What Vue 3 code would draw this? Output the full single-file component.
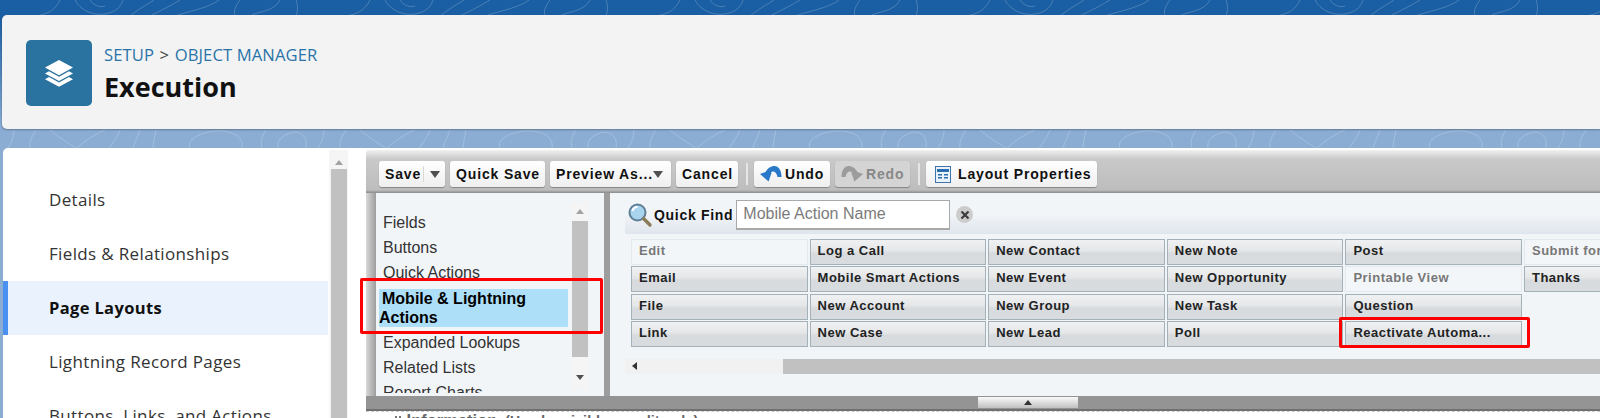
<script setup>
const navItems = [
  { label: 'Details' },
  { label: 'Fields & Relationships' },
  { label: 'Page Layouts', active: true },
  { label: 'Lightning Record Pages' },
  { label: 'Buttons, Links, and Actions' }
]
const listBefore = ['Fields', 'Buttons', 'Quick Actions']
const listAfter = ['Expanded Lookups', 'Related Lists', 'Report Charts']
const cells = [
  { t: 'Edit', off: true }, { t: 'Log a Call' }, { t: 'New Contact' }, { t: 'New Note' }, { t: 'Post' }, { t: 'Submit for Approval', off: true },
  { t: 'Email' }, { t: 'Mobile Smart Actions' }, { t: 'New Event' }, { t: 'New Opportunity' }, { t: 'Printable View', off: true }, { t: 'Thanks' },
  { t: 'File' }, { t: 'New Account' }, { t: 'New Group' }, { t: 'New Task' }, { t: 'Question' }, { t: '', none: true },
  { t: 'Link' }, { t: 'New Case' }, { t: 'New Lead' }, { t: 'Poll' }, { t: 'Reactivate Automa...' }, { t: '', none: true }
]
</script>

<template>
  <div class="page">
    <svg class="topo" width="1600" height="150" aria-hidden="true">
      <defs>
        <pattern id="topo" width="310" height="150" patternUnits="userSpaceOnUse">
          <g fill="none" stroke="#fff" stroke-opacity=".2" stroke-width="1">
            <path d="M60 0c-6 12-14 14-24 16M75 0c5 10 18 16 30 14s16-8 18-14M90 0c3 5 10 8 15 6" />
            <path d="M130 16c10-8 18-12 24-16M150 16c12-6 20-10 30-16M175 16c14-5 34-8 44-16" />
            <path d="M235 16c-2-6 2-12 5-16M250 16c8-5 24-4 30-16M296 0c2 5 2 10 0 16" />
            <path d="M50 130c12 10 20 14 26 18M105 130c-14 6-24 14-30 20M120 130c-2 6-8 14-12 20M140 130c-2 6-6 14-8 20M156 130c-1 6-3 12-3 20" />
            <path d="M190 148c-4-8 10-16 26-17s28 6 26 17M262 148c-2-6 0-12 4-18M8 148c4-6 6-12 6-18M30 148c-1-6 2-12 6-18" />
            <path d="M278 148c-2-8 6-14 16-16 8 0 14 6 12 16" />
          </g>
        </pattern>
      </defs>
      <rect width="1600" height="150" fill="url(#topo)" />
    </svg>

    <header class="card">
      <div class="object-icon">
        <svg width="30" height="30" viewBox="0 0 30 30">
          <path d="M15 2 29 9.6 15 17.2 1 9.6Z" fill="#fff" />
          <path d="M5 13.2 15 18.8 25 13.2 29 15.4 15 23 1 15.4Z" fill="#fff" />
          <path d="M5 19 15 24.6 25 19 29 21.2 15 28.8 1 21.2Z" fill="#fff" />
        </svg>
      </div>
      <div class="titles">
        <div class="crumb"><span>SETUP</span> <i>&gt;</i> <span>OBJECT MANAGER</span></div>
        <h1>Execution</h1>
      </div>
    </header>

    <div class="content">
      <aside class="side">
        <nav class="nav">
          <a v-for="n in navItems" :key="n.label" class="nav-item" :class="{ active: n.active }">{{ n.label }}</a>
        </nav>
        <div class="vscroll side-scroll">
          <span class="tri up"></span>
          <span class="thumb"></span>
        </div>
      </aside>

      <section class="editor">
        <div class="toolbar">
          <button class="tb save"><span class="save-label">Save</span><span class="tri dark"></span></button>
          <button class="tb quick">Quick Save</button>
          <button class="tb preview">Preview As...<span class="tri dark"></span></button>
          <button class="tb cancel">Cancel</button>
          <span class="sep"></span>
          <button class="tb icon-btn undo">
            <svg width="22" height="17" viewBox="0 0 22 17">
              <path d="M0 8 5.5 6C8 1.5 12 0 14.5 0 18.5 0 21.5 4 21.5 11H17.5C17 7.5 15 5.5 13 5.5 12.200 5.5 11.600 6 11 6.5L11.5 7 8.600 15.600Z" fill="#2a78c8" />
            </svg>Undo
          </button>
          <button class="tb icon-btn redo disabled">
            <svg width="22" height="17" viewBox="0 0 22 17">
              <path transform="matrix(-1 0 0 1 22 0)" d="M0 8 5.5 6C8 1.5 12 0 14.5 0 18.5 0 21.5 4 21.5 11H17.5C17 7.5 15 5.5 13 5.5 12.200 5.5 11.600 6 11 6.5L11.5 7 8.600 15.600Z" fill="#9c9c9c" />
            </svg>Redo
          </button>
          <span class="sep"></span>
          <button class="tb icon-btn layout">
            <svg width="16" height="17" viewBox="0 0 16 17">
              <rect x=".5" y=".5" width="15" height="16" fill="#eaf2fb" stroke="#3f74ad" />
              <rect x="2" y="3" width="12" height="3" fill="#2a6cb0" />
              <path d="M3 8h4v1.5H3zM9 8h4v1.5H9zM3 11h4v1.5H3zM9 11h4v1.5H9z" fill="#2a6cb0" />
            </svg>Layout Properties
          </button>
        </div>

        <div class="workspace">
          <div class="palette-list">
            <ul class="list">
              <li v-for="l in listBefore" :key="l">{{ l }}</li>
              <li class="selected">Mobile &amp; Lightning Actions</li>
              <li v-for="l in listAfter" :key="l">{{ l }}</li>
            </ul>
            <div class="vscroll list-scroll">
              <span class="tri up"></span>
              <span class="thumb"></span>
              <span class="tri dark"></span>
            </div>
          </div>

          <div class="palette">
            <div class="finder">
              <svg width="26" height="26" viewBox="0 0 26 26">
                <circle cx="10.5" cy="10.5" r="8" fill="#a9d4ee" stroke="#5f7f94" stroke-width="2" />
                <path d="M5.5 9a5 5 0 0 1 5-4" fill="none" stroke="#fff" stroke-width="2" />
                <path d="M16.5 16.5 23 23" stroke="#8a7a58" stroke-width="3.4" stroke-linecap="round" />
              </svg>
              <span class="find-label">Quick Find</span>
              <input class="find-input" placeholder="Mobile Action Name" />
              <span class="clear">
                <svg width="10" height="10" viewBox="0 0 10 10">
                  <path d="M1.5 1.5l7 7M8.5 1.5l-7 7" stroke="#3d3d3d" stroke-width="2.2" />
                </svg>
              </span>
            </div>
            <div class="grid">
              <div
                v-for="(c, i) in cells"
                :key="i"
                class="cell"
                :class="{ off: c.off, none: c.none }"
              >{{ c.t }}</div>
            </div>
            <div class="hscroll">
              <span class="hleft"><span class="tri left"></span></span>
              <span class="hthumb"></span>
            </div>
          </div>
        </div>

        <div class="splitter"><span class="handle"><span class="tri up black"></span></span></div>
        <div class="preview-head"><span class="grip"></span> Information <small>(Header visible on edit only)</small></div>
      </section>
    </div>

    <div class="mark mark-list"></div>
    <div class="mark mark-cell"></div>
  </div>
</template>

<style>
html, body { margin: 0; padding: 0; background: #fff; }
</style>

<style scoped>
.page {
  position: relative;
  width: 1600px;
  height: 418px;
  overflow: hidden;
  display: flex;
  flex-direction: column;
  background: linear-gradient(#1a5ea3 0, #1a5ea3 15px, #8badd4 130px, #8badd4 150px);
  font-family: "Liberation Sans", Arial, sans-serif;
}
.topo { position: absolute; left: 0; top: 0; }

.card {
  position: relative;
  flex: none;
  height: 114px;
  margin: 15px 0 19px 2px;
  padding: 25px 24px;
  box-sizing: border-box;
  display: flex;
  gap: 12px;
  background: #f3f3f3;
  border-radius: 5px 0 0 5px;
  box-shadow: 0 1px 2px rgba(0, 0, 0, .3);
  font-family: "Open Sans", sans-serif;
}
.object-icon {
  width: 66px;
  height: 66px;
  flex: none;
  display: flex;
  align-items: center;
  justify-content: center;
  background: #2a729f;
  border-radius: 5px;
}
.crumb {
  margin-top: 5px;
  font-size: 16.6px;
  letter-spacing: .12px;
  line-height: 20px;
  color: #2a73a8;
  white-space: nowrap;
}
.crumb i { font-style: normal; color: #444; margin: 0 1px; }
h1 {
  margin: 5px 0 0;
  font-size: 27px;
  line-height: 34px;
  font-weight: 700;
  color: #111;
}

.content {
  position: relative;
  flex: 1;
  min-height: 0;
  margin-left: 3px;
  display: flex;
  background: #fff;
  border-radius: 5px 0 0 0;
}
.side { flex: none; width: 346px; display: flex; }
.nav {
  flex: none;
  width: 325px;
  padding-top: 24.5px;
  font-family: "Open Sans", sans-serif;
  font-size: 17px;
  letter-spacing: .35px;
  color: #333;
}
.nav-item {
  display: flex;
  align-items: center;
  box-sizing: border-box;
  height: 54px;
  padding-left: 46px;
  white-space: nowrap;
}
.nav-item.active {
  padding-left: 41px;
  background: #eaf3fd;
  border-left: 5px solid #4a90f0;
  font-weight: 700;
  font-size: 16.5px;
  color: #111;
}
.vscroll {
  position: relative;
  flex: none;
  display: flex;
  flex-direction: column;
  align-items: center;
  background: #f5f5f5;
}
.side-scroll { width: 19px; margin: 2px 0 0 1px; padding-top: 10px; }
.side-scroll .thumb { display: block; width: 16px; flex: 1; margin-top: 4px; background: #c1c1c1; }

.tri {
  display: inline-block;
  width: 0;
  height: 0;
  border-left: 4px solid transparent;
  border-right: 4px solid transparent;
  border-top: 5px solid #505050;
}
.tb .tri { border-left-width: 5px; border-right-width: 5px; border-top-width: 7px; }
.tri.up { border-top: 0; border-bottom: 5px solid #a3a3a3; }
.tri.up.black { border-bottom-color: #333; }
.tri.left {
  border-top: 4px solid transparent;
  border-bottom: 4px solid transparent;
  border-left: 0;
  border-right: 5px solid #333;
}

.editor {
  flex: 1;
  min-width: 0;
  margin: 2px 0 0 17px;
  display: flex;
  flex-direction: column;
  background: #fff;
  overflow: hidden;
}
.toolbar {
  flex: none;
  height: 43px;
  box-sizing: border-box;
  padding: 11px 0 0 13px;
  display: flex;
  align-items: flex-start;
  gap: 5px;
  background: linear-gradient(#f0f0f0 0, #c9c9c9 9px, #bdbdbd 40px, #8a8a8a 43px);
  border-radius: 3px 0 0 0;
}
.tb {
  height: 26px;
  padding: 0 6px;
  display: flex;
  align-items: center;
  box-sizing: border-box;
  border: 0;
  border-radius: 3px;
  background: linear-gradient(#fff, #efefef);
  box-shadow: 0 1px 1px rgba(0, 0, 0, .3);
  font: 700 14px "Liberation Sans", Arial, sans-serif;
  letter-spacing: .85px;
  color: #111;
  white-space: nowrap;
}
.save { width: 66px; padding: 0 0 0 6px; }
.save-label { width: 38px; border-right: 1px solid #d9d9d9; margin-right: 6px; text-align: left; }
.quick { width: 95px; }
.preview { width: 121px; }
.preview .tri { margin-left: 0; }
.cancel { width: 62px; }
.undo { width: 76px; }
.redo { width: 75px; }
.icon-btn svg { margin: 0 3px 0 0; flex: none; }
.icon-btn.disabled { background: #d4d4d4; color: #888; }
.layout { width: 171px; }
.layout svg { margin: 0 7px 0 3px; }
.sep { width: 2px; height: 22px; margin: 2px 1px 0 3px; background: #e6e6e6; }

.workspace {
  flex: none;
  height: 203px;
  display: flex;
  gap: 6px;
  padding-left: 10px;
  background: linear-gradient(90deg, #d8d8d8, #9d9d9d 10px);
  background-color: #bdbdbd;
}
.palette-list {
  position: relative;
  flex: none;
  width: 228px;
  display: flex;
  background: #f2f5f8;
  overflow: hidden;
}
.list {
  width: 195px;
  height: 200px;
  box-sizing: border-box;
  overflow: hidden;
  margin: 0;
  padding: 17px 0 0 3px;
  list-style: none;
  font-size: 16px;
  line-height: 25px;
  color: #333;
}
.list li { padding-left: 4px; white-space: nowrap; }
.list li.selected {
  box-sizing: border-box;
  width: 189px;
  height: 38px;
  margin: 4px 0 3px;
  padding-left: 0;
  text-indent: 3px;
  white-space: normal;
  background: #aedff9;
  color: #000;
  font-weight: 700;
  line-height: 19px;
}
.list-scroll {
  width: 17px;
  height: 187px;
  margin: 10px 0 0 0;
  padding-top: 6px;
  box-sizing: border-box;
}
.list-scroll .thumb { width: 16px; height: 136px; margin: 7px 0 18px; background: #c1c1c1; }

.palette {
  flex: 1;
  min-width: 0;
  padding-left: 15px;
  background: #f2f5f8;
  overflow: hidden;
}
.finder {
  height: 41px;
  box-sizing: border-box;
  padding: 2px 0 0 2px;
  display: flex;
  align-items: center;
  background: linear-gradient(#f2f5f8 50%, #dfe5ed);
}
.finder svg { flex: none; }
.find-label {
  margin-left: 1px;
  font-weight: 700;
  font-size: 14px;
  letter-spacing: .7px;
  color: #111;
}
.find-input {
  width: 214px;
  height: 30px;
  box-sizing: border-box;
  margin-left: 3px;
  padding: 0 6px 0 6px;
  border: 1px solid #a9a9a9;
  border-width: 1px 1px 2px 1px;
  background: #fff;
  font: 16px "Liberation Sans", Arial, sans-serif;
  outline: 0;
}
.find-input::placeholder { color: #7b7b7b; opacity: 1; }
.clear {
  width: 17px;
  height: 17px;
  margin-left: 6px;
  border-radius: 50%;
  background: #ccc;
  display: flex;
  align-items: center;
  justify-content: center;
}
.grid {
  display: grid;
  grid-template-columns: repeat(6, 176.6px);
  grid-auto-rows: 26px;
  gap: 1.33px 2px;
  margin: 5px 0 0 6px;
}
.cell {
  box-sizing: border-box;
  padding: 0 0 3px 7px;
  display: flex;
  align-items: center;
  border: 1px solid #a5b1b9;
  background: linear-gradient(#f0f1f3, #e4e6e8 45%, #d8dbde 55%, #d9dcdf);
  font-weight: 700;
  font-size: 13px;
  letter-spacing: .5px;
  color: #222;
  white-space: nowrap;
  overflow: hidden;
}
.cell.off { background: #f3f6f9; border-color: #e3e8ec; color: #777; }
.cell.none { visibility: hidden; }
.hscroll {
  height: 15px;
  margin-top: 12px;
  display: flex;
  background: #f1f1f1;
}
.hleft { width: 158px; flex: none; padding-left: 7px; box-sizing: border-box; display: flex; align-items: center; }
.hthumb { flex: 1; background: #c1c1c1; }

.splitter {
  flex: none;
  height: 15px;
  padding-left: 90px;
  display: flex;
  justify-content: center;
  box-sizing: border-box;
  background: #949494;
  border-bottom: 2px solid #707070;
}
.handle {
  width: 100px;
  height: 11px;
  margin-top: 1px;
  display: flex;
  align-items: center;
  justify-content: center;
  background: linear-gradient(#fafafa, #bfbfbf);
}
.preview-head {
  padding: 0 0 0 29px;
  border-top: 1px dashed #ccc;
  font-weight: 700;
  font-size: 16.5px;
  line-height: 16px;
  color: #666;
  white-space: nowrap;
}
.preview-head small { font-size: 14.5px; margin-left: 3px; }
.grip {
  display: inline-block;
  width: 2px;
  height: 10px;
  margin-right: 1px;
  border-left: 2px dotted #777;
  border-right: 2px dotted #777;
}

.mark { position: absolute; box-sizing: border-box; border: 3px solid #f00; border-radius: 2px; }
.mark-list { left: 360px; top: 278px; width: 243px; height: 56px; }
.mark-cell { left: 1339px; top: 317px; width: 191px; height: 31px; }
</style>
